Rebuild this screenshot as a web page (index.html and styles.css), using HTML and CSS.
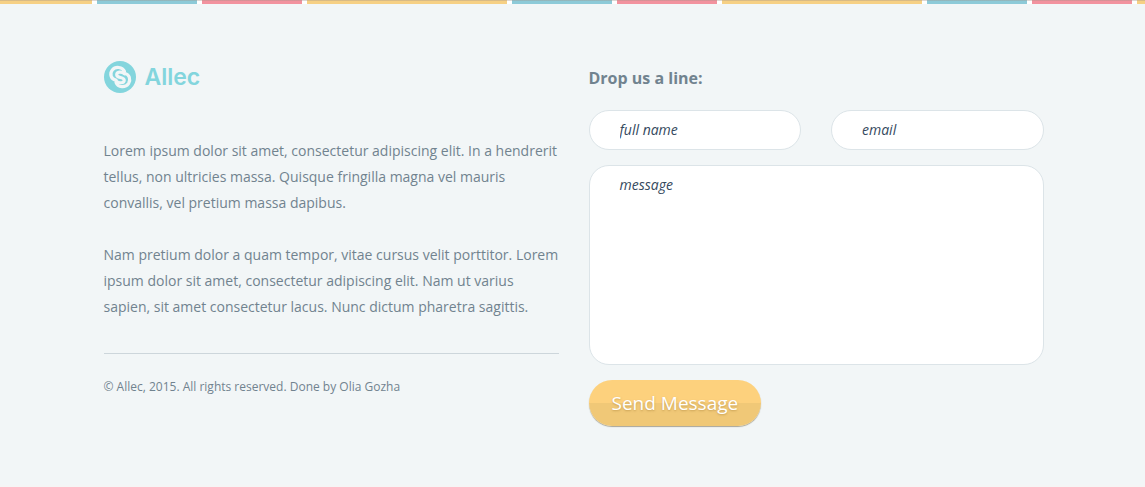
FILE: index.html
```html
<!DOCTYPE html>
<html lang="en">
<head>
<meta charset="utf-8">
<meta name="viewport" content="width=device-width, initial-scale=1">
<title>Allec</title>
<link rel="stylesheet" href="styles.css">
</head>
<body>
<footer class="footer">
  <div class="stripes"></div>
  <div class="container">
    <section class="about">
      <a class="logo" href="#">
        <svg class="logo-mark" viewBox="0 0 32 32" aria-hidden="true">
          <circle cx="16" cy="16" r="16" fill="#83d5dd"/>
          <g fill="none" stroke="#f2f6f7" stroke-width="3.200" stroke-linecap="round">
            <path d="M20.500 10.500C18.500 5.800 11.500 5 8.300 9C5.200 13 7.300 18.600 12 19"/>
            <path d="M20.500 12.700C17.500 10.200 12.800 10.800 12.700 13.700C12.600 17.600 20.400 15.300 20.200 19.300C20 22.300 15 22.600 12.300 20.200"/>
            <path d="M20.500 12.500C25.500 13.200 27 18.500 24.500 22.600C21.500 27 14 26.800 12 21.500"/>
          </g>
        </svg>
        <span class="logo-name">Allec</span>
      </a>
      <p class="text">Lorem ipsum dolor sit amet, consectetur adipiscing elit. In a hendrerit tellus, non ultricies massa. Quisque fringilla magna vel mauris convallis, vel pretium massa dapibus.</p>
      <p class="text">Nam pretium dolor a quam tempor, vitae cursus velit porttitor. Lorem ipsum dolor sit amet, consectetur adipiscing elit. Nam ut varius sapien, sit amet consectetur lacus. Nunc dictum pharetra sagittis.</p>
      <p class="copyright">© Allec, 2015. All rights reserved. Done by Olia Gozha</p>
    </section>
    <section class="contact">
      <h2 class="title">Drop us a line:</h2>
      <form class="form">
        <input class="field" type="text" name="name" placeholder="full name" aria-label="full name">
        <input class="field" type="email" name="email" placeholder="email" aria-label="email">
        <textarea class="field message" name="message" placeholder="message" aria-label="message"></textarea>
        <button class="send" type="submit">Send Message</button>
      </form>
    </section>
  </div>
</footer>
</body>
</html>
```
FILE: styles.css
```css
* {
  box-sizing: border-box;
}

body {
  margin: 0;
  background: #f5f5f5;
  color: #71838f;
  font-family: "Open Sans", sans-serif;
  font-size: 14px;
  line-height: 26px;
}

.footer {
  background: #f2f6f7;
  padding-bottom: 59px;
}

.stripes {
  height: 4px;
  background:
    linear-gradient(rgba(160, 145, 135, 0.35) 1px, transparent 1px),
    linear-gradient(90deg,
      #f6d084 200px, #fff 200px, #fff 205px,
      #8dcad8 205px, #8dcad8 305px, #fff 305px, #fff 310px,
      #f2929e 310px, #f2929e 410px, #fff 410px) -108px 0 / 415px 100%;
}

.container {
  display: grid;
  grid-template-columns: 1fr 1fr;
  gap: 30px;
  max-width: 942px;
  margin: 0 auto;
  padding: 57px 0 0 2px;
}

.logo {
  display: flex;
  align-items: center;
  gap: 9px;
  width: max-content;
  margin-bottom: 45px;
  color: #83d5dd;
  text-decoration: none;
}

.logo-mark {
  width: 32px;
  height: 32px;
}

.logo-name {
  font-family: Inter, sans-serif;
  font-size: 23px;
  font-weight: 600;
  line-height: 32px;
}

.text {
  margin: 0 0 26px;
}

.copyright {
  margin: 33px 0 0;
  padding-top: 20px;
  border-top: 1px solid #cdd6db;
  font-size: 12px;
}

.title {
  margin: 4px 0 19px;
  font-size: 16px;
  font-weight: 700;
  line-height: 26px;
}

.form {
  display: grid;
  grid-template-columns: 1fr 1fr;
  gap: 15px 30px;
}

.field {
  width: 100%;
  min-width: 0;
  height: 40px;
  padding: 0 30px 2px;
  border: 1px solid #dce4e8;
  border-radius: 20px;
  background: #fff;
  color: #34495e;
  font: italic 14px/20px "Open Sans", sans-serif;
}

.field::placeholder {
  color: #34495e;
  opacity: 1;
}

.message {
  display: block;
  grid-column: 1 / -1;
  height: 200px;
  padding: 9px 30px;
  resize: none;
}

.send {
  grid-column: 1 / -1;
  justify-self: start;
  padding: 10px 23px;
  border: 0;
  border-radius: 23px;
  background: linear-gradient(#fdd17d 50%, #f0c877 50%);
  box-shadow: 0 1px 1px #a9a697;
  color: #fff;
  font: 19px/26px "Open Sans", sans-serif;
  text-shadow: 0 1px 2px rgba(160, 120, 50, 0.5);
}
```
